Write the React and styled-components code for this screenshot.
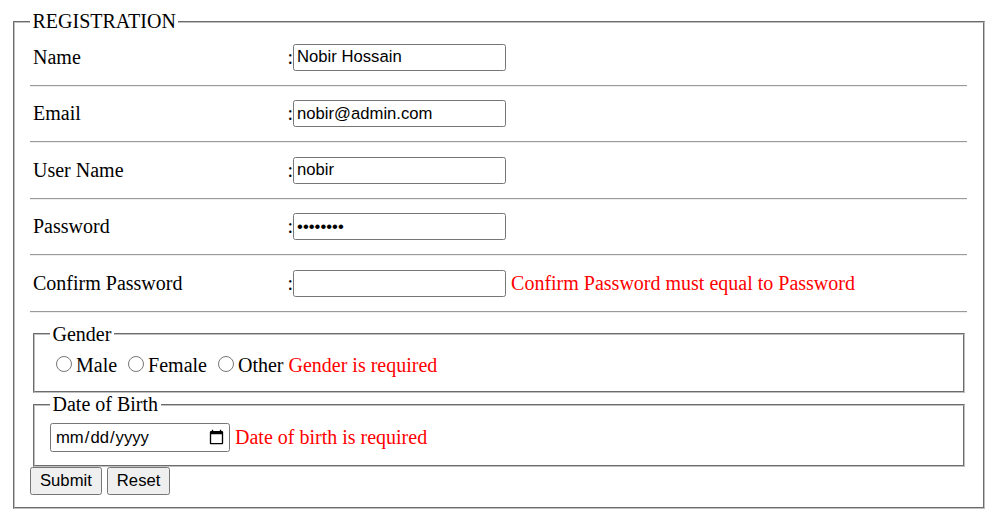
import React from "react";
import styled, { createGlobalStyle } from "styled-components";

const GlobalStyle = createGlobalStyle`
  html, body { background: #ffffff; }
  body {
    margin: 10px;
    font-family: "Liberation Serif", "Times New Roman", serif;
    font-size: 20px;
    color: #000000;
  }
`;

const Fieldset = styled.fieldset`
  margin: 0 2px 0 3px;
  border: 2px groove #c0c0c0;
  padding: 7px ${(p) => (p.$inner ? "15px" : "16px")} ${(p) => p.$bottom || "12.5px"} 15px;
  min-width: 0;
`;

const Legend = styled.legend`
  padding: 0 2.5px;
  font-size: 20px;
  line-height: normal;
`;

const Row = styled.div`
  display: flex;
  align-items: center;
  height: 34.5px;
`;

const Label = styled.span`
  box-sizing: border-box;
  width: 257.5px;
  padding-left: 3px;
  flex: none;
`;

const Colon = styled.span`
  flex: none;
`;

const TextInput = styled.input`
  box-sizing: border-box;
  width: 213px;
  height: 27px;
  margin: 0;
  padding: 0 3px;
  border: 1px solid #767676;
  border-radius: 2.5px;
  font-family: "Liberation Sans", Arial, sans-serif;
  font-size: 16.67px;
  color: #000000;
  background: #ffffff;
  outline: none;
  flex: none;
`;

const ErrorText = styled.span`
  color: #ff0000;
  margin-left: ${(p) => (p.$gap ? "5px" : "0")};
  white-space: nowrap;
`;

const Divider = styled.div`
  height: 0;
  margin: 10px 0;
  border-top: 1px solid #9a9a9a;
  border-bottom: 1px solid #eeeeee;
`;

const RadioLine = styled.div`
  line-height: normal;
  white-space: nowrap;
`;

const Radio = styled.input`
  width: 16px;
  height: 16px;
  margin: 3.75px 3.75px 0 6.25px;
  vertical-align: -1px;
`;

const DateLine = styled.div`
  display: flex;
  align-items: center;
  gap: 5px;
`;

const DateInput = styled.input`
  box-sizing: border-box;
  width: 180px;
  height: 29px;
  margin: 0;
  padding: 1px 2.5px 1px 4px;
  border: 1px solid #767676;
  border-radius: 2.5px;
  font-family: "Liberation Sans", Arial, sans-serif;
  font-size: 16.67px;
  color: #000000;
  background: #ffffff;
  outline: none;
`;

const ButtonRow = styled.div`
  display: flex;
  gap: 5px;
`;

const Button = styled.button`
  box-sizing: border-box;
  height: 27.5px;
  margin: 0;
  padding: 1px 9px;
  border: 1px solid #767676;
  border-radius: 2.5px;
  background: #efefef;
  font-family: "Liberation Sans", Arial, sans-serif;
  font-size: 16.67px;
  color: #000000;
`;

const fields = [
  { label: "Name", type: "text", value: "Nobir Hossain" },
  { label: "Email", type: "text", value: "nobir@admin.com" },
  { label: "User Name", type: "text", value: "nobir" },
  { label: "Password", type: "password", value: "12345678" },
  {
    label: "Confirm Password",
    type: "password",
    value: "",
    error: "Confirm Password must equal to Password",
  },
];

const genders = ["Male", "Female", "Other"];

export default function App() {
  return (
    <>
      <GlobalStyle />
      <form onSubmit={(e) => e.preventDefault()}>
        <Fieldset>
          <Legend>REGISTRATION</Legend>
          {fields.map((f) => (
            <React.Fragment key={f.label}>
              <Row>
                <Label>{f.label}</Label>
                <Colon>:</Colon>
                <TextInput type={f.type} defaultValue={f.value} />
                {f.error && <ErrorText $gap>{f.error}</ErrorText>}
              </Row>
              <Divider />
            </React.Fragment>
          ))}
          <Fieldset $inner $bottom="15px">
            <Legend>Gender</Legend>
            <RadioLine>
              {genders.map((g) => (
                <React.Fragment key={g}>
                  <Radio type="radio" name="gender" value={g} />
                  {g + " "}
                </React.Fragment>
              ))}
              <ErrorText>Gender is required</ErrorText>
            </RadioLine>
          </Fieldset>
          <Fieldset $inner $bottom="13px">
            <Legend>Date of Birth</Legend>
            <DateLine>
              <DateInput type="date" />
              <ErrorText>Date of birth is required</ErrorText>
            </DateLine>
          </Fieldset>
          <ButtonRow>
            <Button type="submit">Submit</Button>
            <Button type="reset">Reset</Button>
          </ButtonRow>
        </Fieldset>
      </form>
    </>
  );
}
